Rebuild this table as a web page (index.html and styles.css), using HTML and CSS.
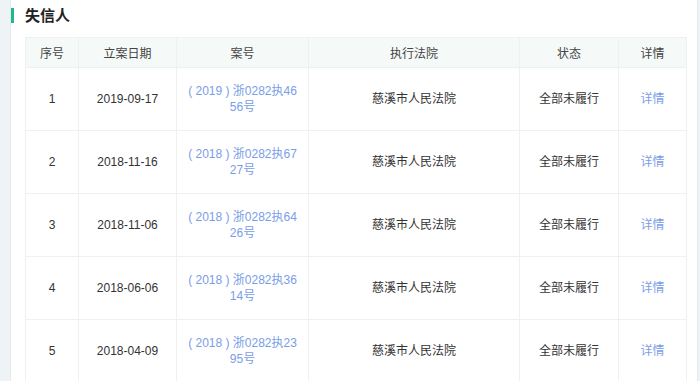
FILE: index.html
```html
<!DOCTYPE html>
<html lang="zh">
<head>
<meta charset="utf-8">
<link rel="stylesheet" href="styles.css">
</head>
<body>
<div class="page">
  <div class="side side-left"></div>
  <div class="panel">
    <h2 class="title">失信人</h2>
    <table class="tbl">
      <colgroup>
        <col class="c1"><col class="c2"><col class="c3"><col class="c4"><col class="c5"><col class="c6">
      </colgroup>
      <thead>
        <tr><th>序号</th><th>立案日期</th><th>案号</th><th>执行法院</th><th>状态</th><th>详情</th></tr>
      </thead>
      <tbody>
        <tr><td>1</td><td>2019-09-17</td><td class="link case">( 2019 ) 浙0282执4656号</td><td>慈溪市人民法院</td><td>全部未履行</td><td class="link">详情</td></tr>
        <tr><td>2</td><td>2018-11-16</td><td class="link case">( 2018 ) 浙0282执6727号</td><td>慈溪市人民法院</td><td>全部未履行</td><td class="link">详情</td></tr>
        <tr><td>3</td><td>2018-11-06</td><td class="link case">( 2018 ) 浙0282执6426号</td><td>慈溪市人民法院</td><td>全部未履行</td><td class="link">详情</td></tr>
        <tr><td>4</td><td>2018-06-06</td><td class="link case">( 2018 ) 浙0282执3614号</td><td>慈溪市人民法院</td><td>全部未履行</td><td class="link">详情</td></tr>
        <tr><td>5</td><td>2018-04-09</td><td class="link case">( 2018 ) 浙0282执2395号</td><td>慈溪市人民法院</td><td>全部未履行</td><td class="link">详情</td></tr>
      </tbody>
    </table>
  </div>
  <div class="side side-right"></div>
</div>
</body>
</html>
```
FILE: styles.css
```css
html, body {
  margin: 0;
  padding: 0;
  background: #fff;
  font-family: "Liberation Sans", "Noto Sans CJK SC", sans-serif;
  color: #333;
  overflow: hidden;
}
.page {
  display: flex;
  width: 700px;
  height: 381px;
}
.side {
  background: #eef4f6;
  flex: none;
}
.side-left {
  width: 10px;
  border-right: 1px solid #e3eaec;
}
.side-right {
  width: 4px;
  border-left: 1px solid #e3eaec;
}
.panel {
  flex: 1;
  padding: 0 10px 0 14px;
}
.title {
  margin: 8px 0 14px -14px;
  padding-left: 11px;
  border-left: 3px solid #1dbb8b;
  font-size: 15px;
  line-height: 15px;
  font-weight: bold;
  color: #222;
}
.tbl {
  width: 661px;
  border-collapse: collapse;
  table-layout: fixed;
  font-size: 12px;
}
.c1 { width: 53px; }
.c2 { width: 98px; }
.c3 { width: 132px; }
.c4 { width: 211px; }
.c5 { width: 99px; }
.c6 { width: 68px; }
.tbl th, .tbl td {
  border: 1px solid #eef1f1;
  text-align: center;
  vertical-align: middle;
  font-weight: normal;
}
.tbl th {
  background: #f5faf9;
  height: 29px;
  padding: 0;
  color: #444;
}
.tbl td {
  height: 62px;
  padding: 0 10px;
  line-height: 16px;
  color: #333;
}
.tbl td.link {
  color: #7a9de8;
}
.tbl td.case {
  word-break: break-all;
}
```
